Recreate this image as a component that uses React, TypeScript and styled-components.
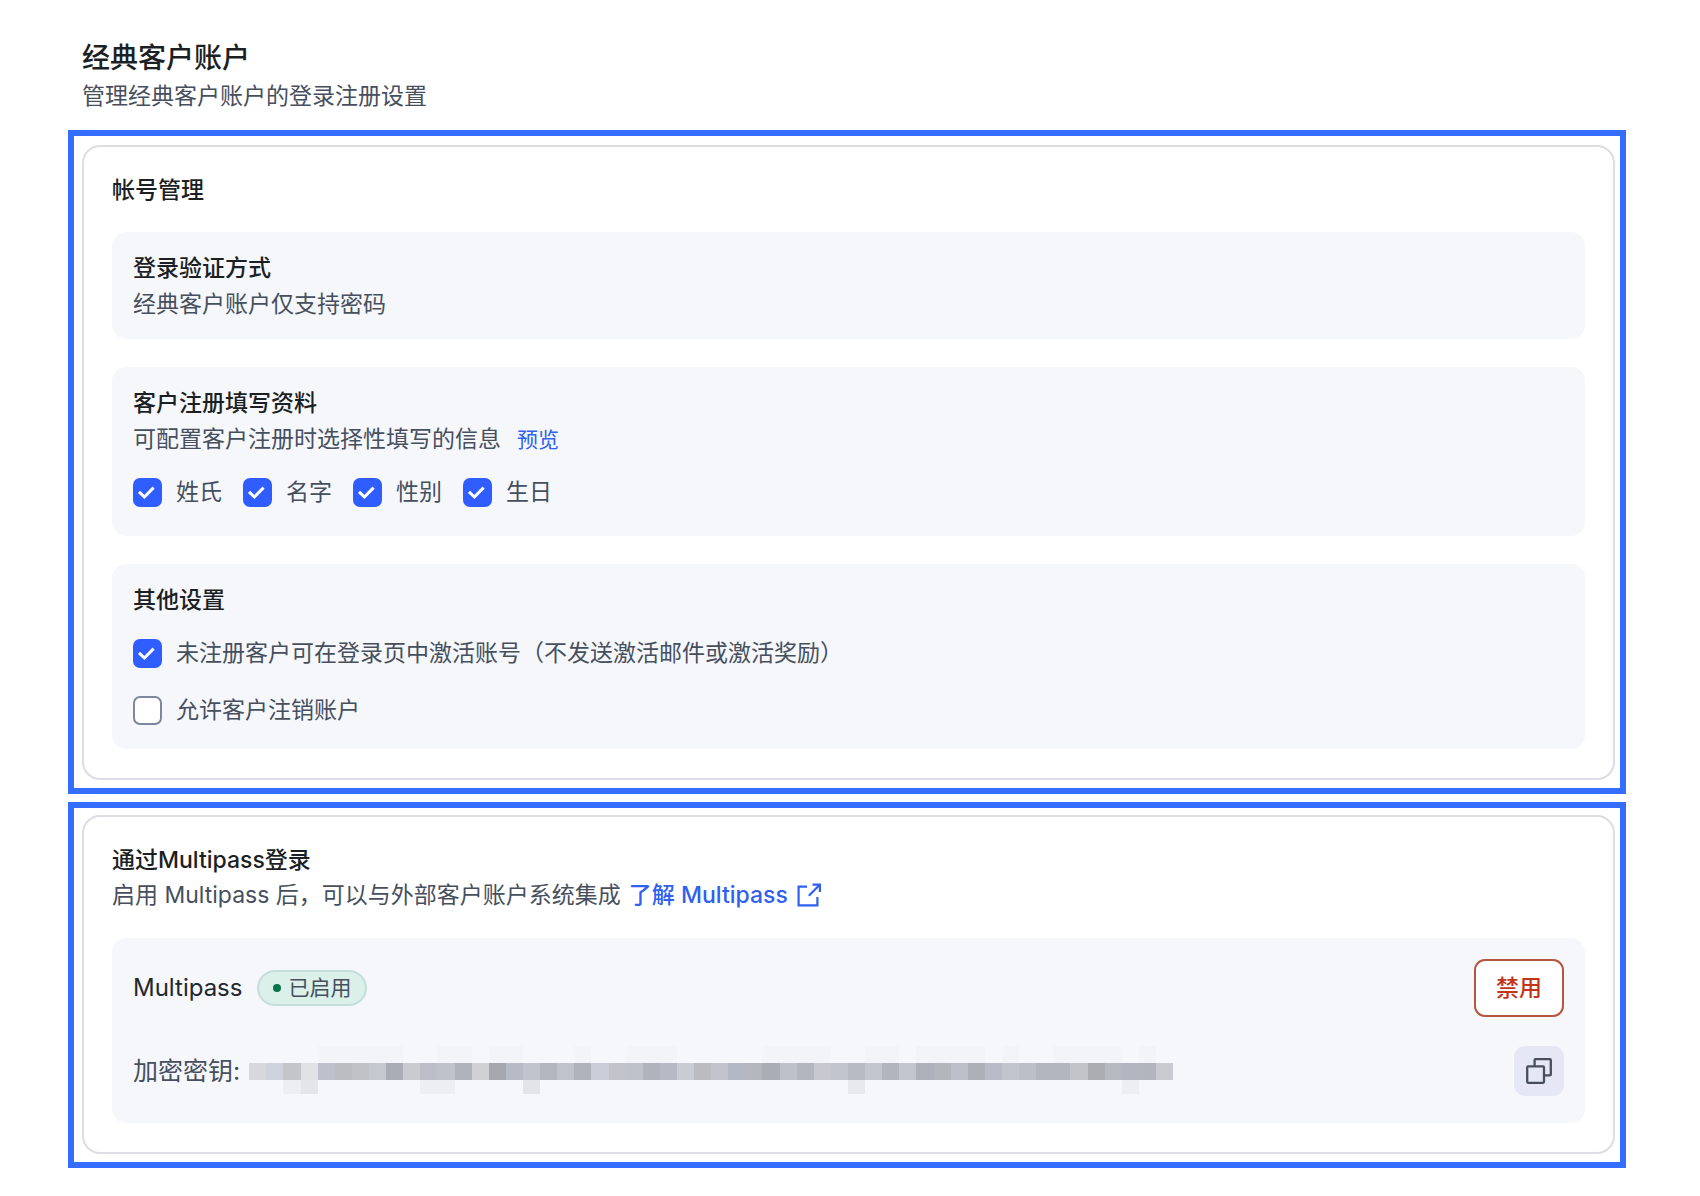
import React, { useId, useState } from "react";
import styled, { createGlobalStyle } from "styled-components";

const GlobalStyle = createGlobalStyle`
  *, *::before, *::after { box-sizing: border-box; }
  body {
    margin: 0;
    background: #fff;
    color: #474f5e;
    font-family: Inter, "Noto Sans CJK SC", sans-serif;
    font-size: 23px;
    line-height: 36px;
  }
  h1, h2, h3, p { margin: 0; }
`;

const Page = styled.main`
  padding: 38px 74px 28px 68px;
`;

const PageHeader = styled.header`
  padding: 0 14px;
  margin-bottom: 16px;
`;

const PageTitle = styled.h1`
  font-size: 28px;
  line-height: 40px;
  font-weight: 500;
  color: #1c1f23;
`;

const Frames = styled.div`
  display: flex;
  flex-direction: column;
  gap: 8px;
`;

const Frame = styled.section<{ $top: number }>`
  border: 6px solid #356dff;
  padding: ${(p) => p.$top}px 5px 8px 8px;
`;

const Card = styled.div`
  border: 2px solid #dcdde5;
  border-radius: 18px;
  padding: 27px 28px 29px;
`;

const CardTitle = styled.h2`
  font-size: 23px;
  line-height: 33px;
  font-weight: 500;
  color: #1c1f23;
`;

const Panels = styled.div`
  display: flex;
  flex-direction: column;
  gap: 28px;
  margin-top: 25px;
`;

const Panel = styled.section`
  background: #f5f7fb;
  border-radius: 14px;
  padding: 18px 21px 17px;
`;

const PanelTitle = styled.h3`
  font-size: 23px;
  line-height: 36px;
  font-weight: 500;
  color: #1c1f23;
`;

const Link = styled.a<{ $strong?: boolean }>`
  color: #3060f0;
  text-decoration: none;
  font-weight: ${(p) => (p.$strong ? 500 : 400)};
`;

const PreviewLink = styled(Link)`
  font-size: 21px;
  line-height: 24px;
  margin-left: 16px;
`;

const LearnLink = styled(Link)`
  display: inline-flex;
  align-items: center;
  gap: 9px;
  margin-left: 8px;
`;

const Options = styled.div<{ $column?: boolean }>`
  display: flex;
  flex-direction: ${(p) => (p.$column ? "column" : "row")};
  gap: 21px;
  padding: ${(p) => (p.$column ? "17px 0 4px" : "17px 0 9px")};
`;

const Option = styled.div`
  display: flex;
  align-items: center;
  gap: 14px;
`;

const Box = styled.span`
  position: relative;
  display: flex;
  width: 29px;
  height: 29px;
`;

const BoxInput = styled.input`
  appearance: none;
  margin: 0;
  width: 29px;
  height: 29px;
  border: 2px solid #7e86a0;
  border-radius: 7px;
  background: #fff;
  cursor: pointer;
  &:checked {
    background: #2f5dff;
    border-color: #2f5dff;
  }
`;

const Tick = styled.svg`
  position: absolute;
  inset: 0;
  pointer-events: none;
`;

const KeyPanel = styled(Panel)`
  display: flex;
  flex-direction: column;
  gap: 29px;
  margin-top: 25px;
  padding: 21px 21px 27px;
`;

const Row = styled.div`
  display: flex;
  align-items: center;
  justify-content: space-between;
`;

const RowStart = styled.div`
  display: flex;
  align-items: center;
  gap: 15px;
`;

const Name = styled.span`
  font-size: 24px;
  color: #23272e;
`;

const Badge = styled.span`
  display: inline-flex;
  align-items: center;
  gap: 7px;
  height: 36px;
  padding: 0 14px;
  border: 2px solid #c6ded9;
  border-radius: 18px;
  background: #daf0e9;
  font-size: 21px;
  line-height: 32px;
`;

const Dot = styled.span`
  width: 8px;
  height: 8px;
  border-radius: 50%;
  background: #08724a;
`;

const DangerButton = styled.button`
  height: 58px;
  padding: 0 20px;
  border: 2px solid #b5563f;
  border-radius: 11px;
  background: #fff;
  color: #c2351a;
  font: inherit;
  font-weight: 500;
  cursor: pointer;
`;

const IconButton = styled.button`
  display: flex;
  align-items: center;
  justify-content: center;
  width: 50px;
  height: 50px;
  padding: 0;
  border: 0;
  border-radius: 11px;
  background: #e5e8f4;
  color: #474f5e;
  cursor: pointer;
`;

const KeyName = styled.span`
  font-size: 25px;
`;

const KeyRow = styled(RowStart)`
  gap: 9px;
`;

const Mosaic = styled.div`
  display: grid;
  grid-template-rows: 17px 17px 14px;
  width: 924px;
  padding-bottom: 2px;
`;

const MosaicRow = styled.div`
  display: flex;
`;

const Cell = styled.span`
  flex: 1;
`;

const CLEAR = "#f5f7fb";
const MIDDLE = (
  "d7d8dc ced2dc c4c5c9 e0e1e5 bec0cb bbbdc1 c0c2c8 c5c8cc aaadb5 cacbd0 bbbec6 bfc2cb b0b3bb d0d1d5 " +
  "a5a8b0 b7bbc6 c1c4cd b5b7c0 c0c2cc b0b3bb cacdd7 c2c3c8 c0c2cb b0b3bc b7b9c4 caccd5 babcc1 c1c4cd " +
  "b4b8c4 b5b7bf abadb5 bec0ca b3b6be c7c8cd c3c5ce b9bbc4 c3c6cf b3b5bd c3c6cf aeb1ba b4b6be bdc0c9 " +
  "adb0b8 b9bcc6 c2c5cd bcbfc8 b3b5bf b3b5bf c2c3c8 abadb3 b7b9c1 b3b6c0 b3b5be cacbd0"
)
  .split(" ")
  .map((c) => "#" + c);
const FAINT = [4, 5, 6, 7, 8, 11, 12, 14, 15, 19, 22, 23, 24, 30, 31, 32, 33, 36, 37, 39, 40, 41, 42, 44, 47, 48, 49, 50, 52];
const LOW: Record<number, string> = {
  2: "#edeef1", 3: "#e4e5e9", 10: "#eceef1", 11: "#eceef1", 16: "#e3e4e8", 35: "#e8e9ed", 51: "#edeef1",
};
const MOSAIC = [
  MIDDLE.map((_, i) => (FAINT.includes(i) ? "#f3f4f8" : CLEAR)),
  MIDDLE,
  MIDDLE.map((_, i) => LOW[i] ?? CLEAR),
];

function Checkbox({ label, initial = true }: { label: string; initial?: boolean }) {
  const id = useId();
  const [on, setOn] = useState(initial);
  return (
    <Option>
      <Box>
        <BoxInput id={id} type="checkbox" checked={on} onChange={(e) => setOn(e.target.checked)} />
        {on && (
          <Tick viewBox="0 0 29 29" width="29" height="29" fill="none" aria-hidden="true">
            <path d="M6 13.8 L11.4 19 L20.6 9.6" stroke="#fff" strokeWidth="3" />
          </Tick>
        )}
      </Box>
      <label htmlFor={id}>{label}</label>
    </Option>
  );
}

const ExternalIcon = () => (
  <svg width="24" height="24" viewBox="0 0 24 24" fill="none" stroke="currentColor" strokeWidth="2.2" aria-hidden="true">
    <path d="M10 3.6H1.6V22.4H20.4V14" />
    <path d="M15.5 1.6H22.9V9M22.5 2L11.8 12.7" />
  </svg>
);

const CopyIcon = () => (
  <svg width="26" height="26" viewBox="0 0 26 26" fill="none" stroke="currentColor" strokeWidth="2.3" strokeLinejoin="round" aria-hidden="true">
    <rect x="1.2" y="8.4" width="16.8" height="16.4" rx="1" />
    <path d="M8.6 8.4V2.2a1 1 0 0 1 1-1H23.8a1 1 0 0 1 1 1V16.4a1 1 0 0 1-1 1H18" />
  </svg>
);

export default function App() {
  return (
    <>
      <GlobalStyle />
      <Page>
        <PageHeader>
          <PageTitle>经典客户账户</PageTitle>
          <p>管理经典客户账户的登录注册设置</p>
        </PageHeader>
        <Frames>
          <Frame $top={9}>
            <Card>
              <CardTitle>帐号管理</CardTitle>
              <Panels>
                <Panel>
                  <PanelTitle>登录验证方式</PanelTitle>
                  <p>经典客户账户仅支持密码</p>
                </Panel>
                <Panel>
                  <PanelTitle>客户注册填写资料</PanelTitle>
                  <p>
                    可配置客户注册时选择性填写的信息
                    <PreviewLink href="#preview">预览</PreviewLink>
                  </p>
                  <Options>
                    {["姓氏", "名字", "性别", "生日"].map((label) => (
                      <Checkbox key={label} label={label} />
                    ))}
                  </Options>
                </Panel>
                <Panel>
                  <PanelTitle>其他设置</PanelTitle>
                  <Options $column>
                    <Checkbox label="未注册客户可在登录页中激活账号（不发送激活邮件或激活奖励）" />
                    <Checkbox label="允许客户注销账户" initial={false} />
                  </Options>
                </Panel>
              </Panels>
            </Card>
          </Frame>
          <Frame $top={7}>
            <Card>
              <CardTitle>通过Multipass登录</CardTitle>
              <p>
                启用 Multipass 后，可以与外部客户账户系统集成
                <LearnLink $strong href="#multipass">
                  了解 Multipass
                  <ExternalIcon />
                </LearnLink>
              </p>
              <KeyPanel>
                <Row>
                  <RowStart>
                    <Name>Multipass</Name>
                    <Badge>
                      <Dot />
                      已启用
                    </Badge>
                  </RowStart>
                  <DangerButton type="button">禁用</DangerButton>
                </Row>
                <Row>
                  <KeyRow>
                    <KeyName>加密密钥:</KeyName>
                    <Mosaic aria-hidden="true">
                      {MOSAIC.map((row, r) => (
                        <MosaicRow key={r}>
                          {row.map((background, i) => (
                            <Cell key={i} style={{ background }} />
                          ))}
                        </MosaicRow>
                      ))}
                    </Mosaic>
                  </KeyRow>
                  <IconButton type="button" aria-label="复制">
                    <CopyIcon />
                  </IconButton>
                </Row>
              </KeyPanel>
            </Card>
          </Frame>
        </Frames>
      </Page>
    </>
  );
}
